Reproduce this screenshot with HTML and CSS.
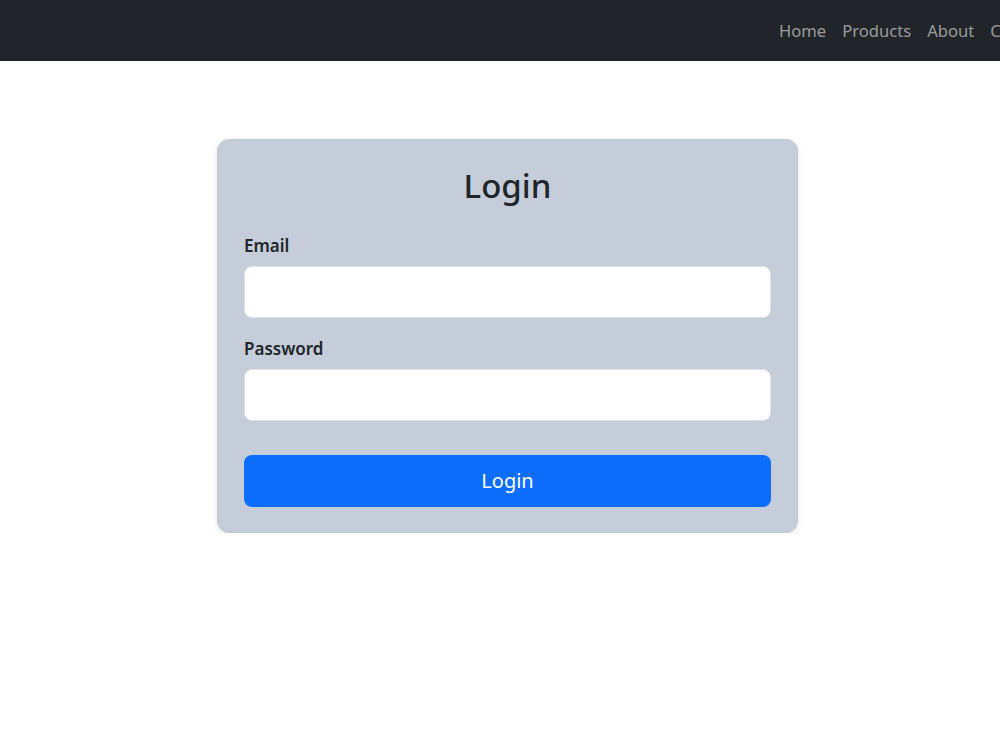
FILE: index.html
```html
<!DOCTYPE html>
<html lang="en">
<head>
  <meta charset="UTF-8">
  <meta name="viewport" content="width=device-width, initial-scale=1.0">
  <title>Login</title>
  <link rel="stylesheet" href="styles.css">
</head>
<body>
  <nav class="navbar">
    <ul class="nav-links">
      <li><a href="#">Home</a></li>
      <li><a href="#">Products</a></li>
      <li><a href="#">About</a></li>
      <li><a href="#">Contact</a></li>
    </ul>
  </nav>

  <main class="page">
    <form class="login-card" id="loginForm">
      <h2 class="login-title">Login</h2>
      <div class="field">
        <label for="email">Email</label>
        <input type="email" id="email">
      </div>
      <div class="field">
        <label for="password">Password</label>
        <input type="password" id="password">
      </div>
      <button type="submit" class="login-btn">Login</button>
    </form>
  </main>
</body>
</html>
```

FILE: styles.css
```css
* {
  box-sizing: border-box;
}

body {
  margin: 0;
  font-family: "Segoe UI", "Noto Sans", "Open Sans", sans-serif;
  color: #212529;
  background-color: #fff;
  overflow: hidden;
}

.navbar {
  height: 61px;
  background-color: #212529;
  display: flex;
  align-items: center;
  overflow: hidden;
  white-space: nowrap;
}

.nav-links {
  list-style: none;
  margin: 0;
  padding: 0 0 0 771px;
  display: flex;
}

.nav-links a {
  display: block;
  padding: 8px;
  font-size: 16.6px;
  color: rgba(255, 255, 255, 0.55);
  text-decoration: none;
}

.page {
  display: flex;
  justify-content: center;
  padding: 78px 0 0 15px;
}

.login-card {
  width: 581px;
  padding: 26px 26px 25px;
  background-color: #c4cdd9;
  border: 1px solid #c0c9d5;
  border-radius: 12px;
  box-shadow: 0 2px 6px rgba(0, 0, 0, 0.1);
}

.login-title {
  margin: 0 0 28px;
  text-align: center;
  font-size: 33px;
  font-weight: 500;
  line-height: 1.2;
}

.field {
  margin-bottom: 19px;
}

.field label {
  display: block;
  margin-bottom: 8px;
  font-size: 17px;
  font-weight: 600;
  line-height: 24px;
}

.field input {
  display: block;
  width: 100%;
  height: 52px;
  padding: 8px 16px;
  font-size: 20px;
  border: 1px solid #dee2e6;
  border-radius: 8px;
  background-color: #fff;
}

.login-btn {
  display: block;
  width: 100%;
  height: 52px;
  margin-top: 34px;
  border: none;
  border-radius: 8px;
  background-color: #0d6efd;
  color: #fff;
  font-family: inherit;
  font-size: 20px;
  cursor: pointer;
}
```
